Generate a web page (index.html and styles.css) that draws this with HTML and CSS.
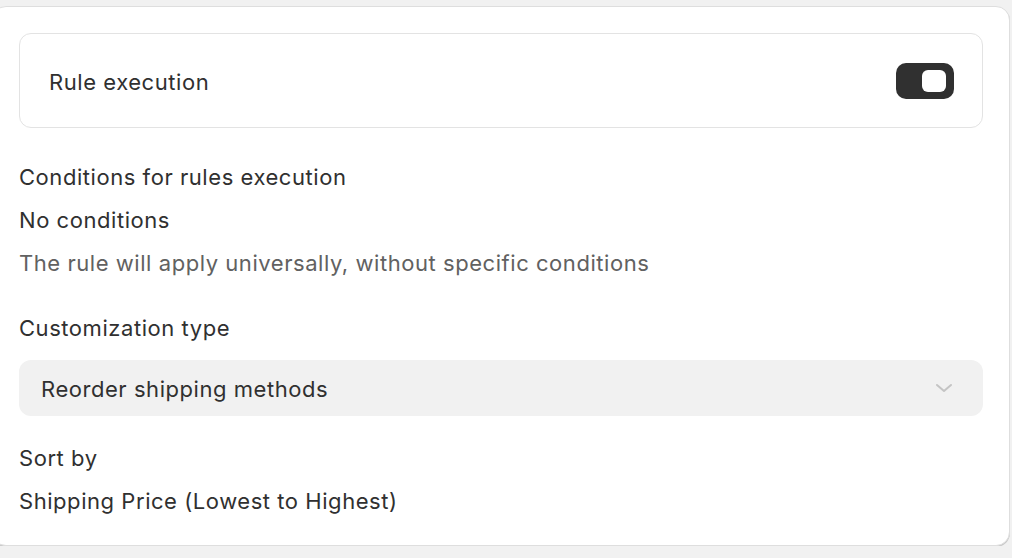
FILE: index.html
```html
<!DOCTYPE html>
<html>
<head>
<meta charset="utf-8">
<link rel="stylesheet" href="styles.css">
</head>
<body>
<div class="card">
  <div class="toggle-card">
    <span class="toggle-label">Rule execution</span>
    <span class="toggle"><span class="knob"></span></span>
  </div>
  <div class="group first">
    <div class="line">Conditions for rules execution</div>
    <div class="line">No conditions</div>
    <div class="line muted">The rule will apply universally, without specific conditions</div>
  </div>
  <div class="group second">
    <div class="line">Customization type</div>
  </div>
  <div class="select">
    <span>Reorder shipping methods</span>
    <svg class="chev" width="18" height="10" viewBox="0 0 18 10"><path d="M2 2 L9 8 L16 2" fill="none" stroke="#c4c4c4" stroke-width="2" stroke-linecap="round" stroke-linejoin="round"/></svg>
  </div>
  <div class="group third">
    <div class="line">Sort by</div>
    <div class="line">Shipping Price (Lowest to Highest)</div>
  </div>
</div>
</body>
</html>
```
FILE: styles.css
```css
html, body {
  margin: 0;
  padding: 0;
  background: #f1f1f1;
  font-family: Inter, "Noto Sans", sans-serif;
  color: #303030;
}
.card {
  box-sizing: border-box;
  margin-top: 6px;
  margin-left: -8px;
  width: 1018px;
  height: 540px;
  background: #fff;
  border: 1px solid #dedede;
  border-radius: 14px;
  box-shadow: 0 1px 0 #c9c9c9;
  padding: 26px 26px 0 26px;
}
.toggle-card {
  box-sizing: border-box;
  height: 95px;
  border: 1px solid #e3e3e3;
  border-radius: 12px;
  display: flex;
  align-items: center;
  justify-content: space-between;
  padding: 2px 28px 0 29px;
}
.toggle-label {
  font-size: 22px;
  letter-spacing: 0.55px;
}
.toggle {
  box-sizing: border-box;
  width: 58px;
  height: 36px;
  margin-top: -2px;
  background: #303030;
  border-radius: 10px;
  display: flex;
  justify-content: flex-end;
  align-items: center;
  padding-right: 8px;
}
.knob {
  width: 24px;
  height: 22px;
  background: #fff;
  border-radius: 6px;
}
.line {
  font-size: 22px;
  letter-spacing: 0.55px;
  line-height: 43px;
}
.muted {
  color: #616161;
}
.group.first {
  margin-top: 28px;
}
.group.second {
  margin-top: 22px;
}
.select {
  box-sizing: border-box;
  margin-top: 10px;
  height: 56px;
  background: #f1f1f1;
  border-radius: 12px;
  display: flex;
  align-items: center;
  justify-content: space-between;
  padding: 1px 30px 0 22px;
  font-size: 22px;
  letter-spacing: 0.55px;
}
.chev {
  margin-top: -1px;
}
.group.third {
  margin-top: 21px;
}
```
